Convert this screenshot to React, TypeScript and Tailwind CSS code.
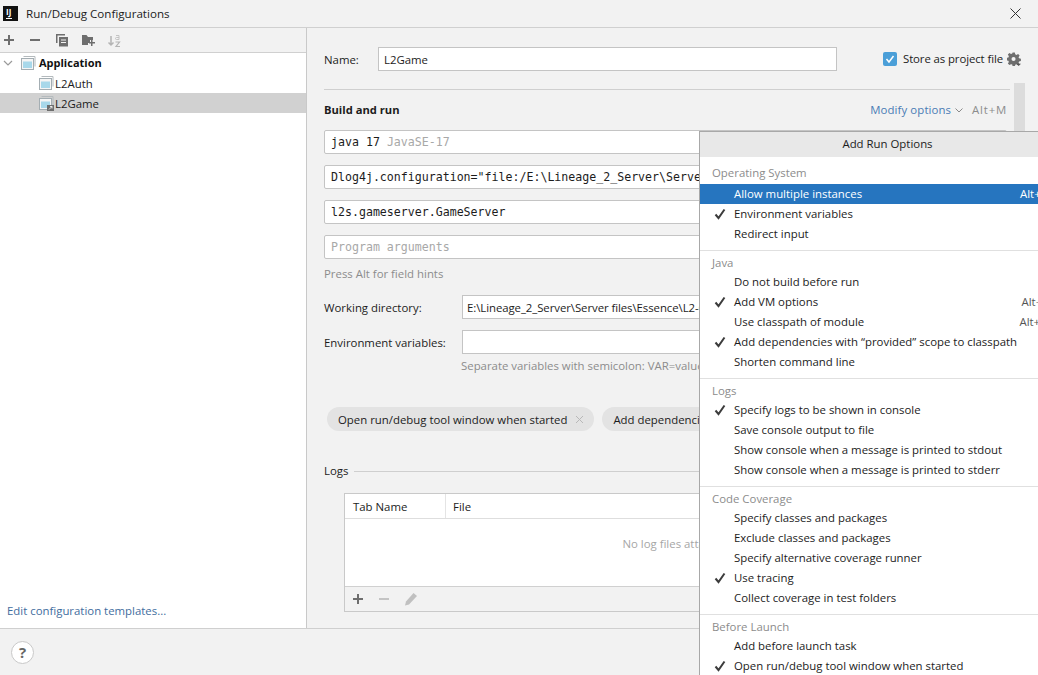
import React from 'react';

const ui = "[font-family:'Open_Sans','Noto_Sans',sans-serif]";

function PlusIcon({ className = 'text-[#6e6e6e]' }: { className?: string }) {
  return (
    <svg width="12" height="12" viewBox="0 0 12 12" className={className}>
      <path d="M5 1h2v4h4v2H7v4H5V7H1V5h4z" fill="currentColor" />
    </svg>
  );
}

function MinusIcon({ className = 'text-[#6e6e6e]' }: { className?: string }) {
  return (
    <svg width="12" height="12" viewBox="0 0 12 12" className={className}>
      <rect x="1" y="5" width="10" height="2" fill="currentColor" />
    </svg>
  );
}

function CopyIcon() {
  return (
    <svg width="14" height="14" viewBox="0 0 14 14">
      <path d="M1 1h9v1.500H2.500V10H1z" fill="#6e6e6e" />
      <path d="M4 4h9v9.500H4z" fill="#6e6e6e" />
      <path d="M6 6.500h5v1H6zM6 9h5v1H6z" fill="#f2f2f2" />
    </svg>
  );
}

function FolderPlusIcon() {
  return (
    <svg width="15" height="14" viewBox="0 0 15 14">
      <path d="M1 2h4.500l1.500 2h5v3H9v3H7v2H1z" fill="#6e6e6e" />
      <path d="M10 7h1.500v2H14v1.500h-2.500V13H10v-2.500H8V9h2z" fill="#6e6e6e" />
    </svg>
  );
}

function SortIcon() {
  return (
    <svg width="14" height="15" viewBox="0 0 14 15" fill="none">
      <path d="M4 3v9M1.500 9.500 4 12l2.500-2.500" stroke="#b4b4b4" strokeWidth="1.500" />
      <path d="M9 2.500h3v4H9.500a1 1 0 0 1 0-2H12" stroke="#c4c4c4" />
      <path d="M8.500 9h4L9 13.500h4" stroke="#b4b4b4" strokeWidth="1.200" />
    </svg>
  );
}

function AppIcon({ link }: { link?: boolean }) {
  return (
    <svg width="15" height="15" viewBox="0 0 15 15" className="shrink-0">
      <path d="M2.500 0.500h11.500v10" fill="none" stroke="#b4babd" />
      <rect x="0.500" y="2.500" width="12" height="11" fill="#f5f5f5" stroke="#a4aeb3" />
      <rect x="2" y="5.500" width="9" height="6.500" fill="#a8d8ea" />
      {link && (
        <>
          <rect x="8" y="9" width="7" height="6" fill="#6e6e6e" />
          <path d="M10 13.500 13 10.500M11 10.500h2v2" stroke="#fff" strokeWidth="0.800" fill="none" />
        </>
      )}
    </svg>
  );
}

function CheckMark() {
  return (
    <svg width="12" height="12" viewBox="0 0 12 12" fill="none">
      <path d="M1.500 6.500 4.500 10 10.500 1.500" stroke="#3c3c3c" strokeWidth="2" />
    </svg>
  );
}

function GearIcon() {
  return (
    <svg width="14" height="14" viewBox="0 0 15 15">
      <path
        d="M6 0.500h2.400l.4 2 1.300.6 1.800-1 1.600 1.700-1.100 1.700.5 1.300 2 .5v2.300l-2 .5-.5 1.300 1 1.200-1.600 1.600-1.700-1-1.300.5-.3 1.800H6l-.4-2-1.300-.5-1.700 1-1.700-1.600 1.100-1.700-.5-1.300-2-.4V6.300l2-.5.5-1.300-1.100-1.700L2.600 1.100l1.700 1.100 1.300-.5z"
        fill="#6e6e6e"
      />
      <circle cx="7" cy="7.500" r="2.200" fill="#f2f2f2" />
      <path d="M10 12.500h5l-2.500 2.500z" fill="#555" />
    </svg>
  );
}

type Item = { label: string; checked?: boolean; shortcut?: string; active?: boolean };

const sections: { title: string; items: Item[] }[] = [
  {
    title: 'Operating System',
    items: [
      { label: 'Allow multiple instances', shortcut: 'Alt+U', active: true },
      { label: 'Environment variables', checked: true },
      { label: 'Redirect input' },
    ],
  },
  {
    title: 'Java',
    items: [
      { label: 'Do not build before run' },
      { label: 'Add VM options', checked: true, shortcut: 'Alt+V' },
      { label: 'Use classpath of module', shortcut: 'Alt+O' },
      { label: 'Add dependencies with “provided” scope to classpath', checked: true },
      { label: 'Shorten command line' },
    ],
  },
  {
    title: 'Logs',
    items: [
      { label: 'Specify logs to be shown in console', checked: true },
      { label: 'Save console output to file' },
      { label: 'Show console when a message is printed to stdout' },
      { label: 'Show console when a message is printed to stderr' },
    ],
  },
  {
    title: 'Code Coverage',
    items: [
      { label: 'Specify classes and packages' },
      { label: 'Exclude classes and packages' },
      { label: 'Specify alternative coverage runner' },
      { label: 'Use tracing', checked: true },
      { label: 'Collect coverage in test folders' },
    ],
  },
  {
    title: 'Before Launch',
    items: [
      { label: 'Add before launch task' },
      { label: 'Open run/debug tool window when started', checked: true },
    ],
  },
];

function OptionsPopup() {
  return (
    <div className="absolute left-[699px] top-[131px] w-[360px] h-[560px] bg-white border-l border-t border-[#a8a8a8] text-[#1c1c1c]">
      <div className="h-[25px] bg-[#e8e8e8] flex items-center justify-center pl-[16px] pb-[2px]">Add Run Options</div>
      {sections.map((s, i) => (
        <div key={s.title} className={i === 0 ? 'pt-[6px] pb-[6px]' : 'pt-[2px] pb-[6px] border-t border-[#e0e0e0]'}>
          <div className={`${i === 0 ? 'h-[20px] mb-px' : 'h-[19px]'} pl-3 flex items-center text-[#8c8c8c]`}>{s.title}</div>
          {s.items.map((it) => (
            <div
              key={it.label}
              className={`h-5 flex items-center pr-[10px] ${it.active ? 'bg-[#2675bf] text-white' : ''}`}
            >
              <span className="w-[34px] pl-[14px] shrink-0">{it.checked && <CheckMark />}</span>
              <span>{it.label}</span>
              {it.shortcut && <span className={`ml-auto ${it.active ? 'text-white' : 'text-[#555]'}`}>{it.shortcut}</span>}
            </div>
          ))}
        </div>
      ))}
    </div>
  );
}

function MonoField({ children }: { children: React.ReactNode }) {
  return (
    <div className="h-6 bg-white border border-[#c4c4c4] rounded-[2px] pl-[6px] pt-px flex items-center whitespace-nowrap overflow-hidden [font-family:'DejaVu_Sans_Mono',monospace] text-[11.6px] text-[#1c1c1c]">
      {children}
    </div>
  );
}

function Sidebar() {
  return (
    <aside className="w-[307px] shrink-0 flex flex-col border-r border-[#c9c9c9]">
      <div className="h-[25px] shrink-0 flex items-center gap-[13px] pl-[3px] border-b border-[#d0d0d0]">
        <PlusIcon />
        <span className="ml-[1px]"><MinusIcon /></span>
        <span className="ml-[1px]"><CopyIcon /></span>
        <span className="ml-[-1px]"><FolderPlusIcon /></span>
        <span className="ml-[-2px]"><SortIcon /></span>
      </div>
      <div className="flex-1 bg-white flex flex-col pb-[9px]">
        <div className="h-5 flex items-center pl-[3px] gap-[8px] text-[#111]">
          <svg width="10" height="10" viewBox="0 0 10 10" fill="none">
            <path d="M1 3l4 4 4-4" stroke="#9a9a9a" strokeWidth="1.200" />
          </svg>
          <AppIcon />
          <span className="ml-[-5px] pt-px font-bold text-[11px]">Application</span>
        </div>
        <div className="h-5 flex items-center pl-[39px] gap-[1px]"><AppIcon /><span className="pt-px">L2Auth</span></div>
        <div className="h-5 flex items-center pl-[39px] gap-[1px] bg-[#d1d1d1]"><AppIcon link /><span className="pt-px">L2Game</span></div>
        <a className="mt-auto pl-[7px] text-[#3f6d9e]">Edit configuration templates...</a>
      </div>
    </aside>
  );
}

function MainPanel() {
  return (
    <section className="flex-1 min-w-0 pl-[17px] overflow-hidden relative">
      <div className="flex items-center h-6 mt-[19px]">
        <span className="w-[54px] pt-px">Name:</span>
        <div className="w-[459px] h-6 bg-white border border-[#c4c4c4] pl-[5px] pt-px flex items-center">L2Game</div>
        <span className="ml-[46px] w-[14px] h-[14px] rounded-[2px] bg-[#4b9fd8] flex items-center justify-center">
          <svg width="10" height="10" viewBox="0 0 10 10" fill="none">
            <path d="M1.500 5 4 8l4.500-6" stroke="#fff" strokeWidth="1.500" />
          </svg>
        </span>
        <span className="ml-[6px] tracking-[-0.1px]">Store as project file</span>
        <span className="ml-[4px]"><GearIcon /></span>
      </div>
      <div className="h-px bg-[#cfcfcf] mt-[18px] w-[686px]" />
      <div className="flex items-center h-5 mt-[10px] w-[683px]">
        <span className="font-bold text-[11.2px]">Build and run</span>
        <span className="ml-auto text-[#4a7cb5] tracking-[0.1px]">Modify options</span>
        <svg width="8" height="8" viewBox="0 0 8 8" fill="none" className="ml-[4px]">
          <path d="M.5 2.500 4 6l3.500-3.500" stroke="#8a8a8a" />
        </svg>
        <span className="ml-[9px] text-[#8c8c8c] tracking-[0.8px]">Alt+M</span>
      </div>
      <div className="w-[683px] mt-[10px] flex flex-col gap-[11px]">
        <MonoField>
          <span>java 17</span>
          <span className="ml-[7px] text-[#a8a8a8]">JavaSE-17</span>
        </MonoField>
        <MonoField>Dlog4j.configuration="file:/E:\Lineage_2_Server\Server files\Essence\L2-config\log4j2.xml"</MonoField>
        <MonoField>l2s.gameserver.GameServer</MonoField>
        <MonoField><span className="text-[#a8a8a8]">Program arguments</span></MonoField>
      </div>
      <div className="text-[#8c8c8c] h-4 flex items-center mt-[7px]">Press Alt for field hints</div>
      <div className="flex items-center mt-[13px]">
        <span className="w-[138px] pt-px">Working directory:</span>
        <div className="w-[540px] h-6 bg-white border border-[#c4c4c4] pl-[4px] pt-px flex items-center whitespace-nowrap overflow-hidden tracking-[-0.07px]">E:\Lineage_2_Server\Server files\Essence\L2-GameServer</div>
      </div>
      <div className="flex items-center mt-[11px]">
        <span className="w-[138px] pt-px">Environment variables:</span>
        <div className="w-[540px] h-6 bg-white border border-[#c4c4c4]" />
      </div>
      <div className="pl-[137px] text-[#8c8c8c] h-4 mt-[4px] flex items-center whitespace-nowrap">Separate variables with semicolon: VAR=value; VAR1=value1</div>
      <div className="flex gap-2 ml-[3px] mt-[33px] whitespace-nowrap">
        <span className="h-6 rounded-full bg-[#e3e3e3] pl-[11px] pr-[10px] pt-px flex items-center gap-2 shrink-0">
          Open run/debug tool window when started
          <svg width="9" height="9" viewBox="0 0 9 9" fill="none">
            <path d="M1 1l7 7M8 1 1 8" stroke="#b8b8b8" />
          </svg>
        </span>
        <span className="h-6 rounded-full bg-[#e3e3e3] pl-[11px] pr-[9px] pt-px flex items-center shrink-0">Add dependencies with “provided” scope</span>
      </div>
      <div className="flex items-center gap-[6px] mt-[30px] h-[20px]">
        <span>Logs</span>
        <div className="h-px w-[400px] bg-[#cfcfcf]" />
      </div>
      <div className="ml-[20px] mt-[12px] w-[663px] h-[119px] border border-[#c9c9c9] flex flex-col">
        <div className="h-[25px] shrink-0 bg-white border-b border-[#dedede] flex items-center">
          <span className="w-[101px] h-full pl-2 pt-px border-r border-[#e4e4e4] flex items-center">Tab Name</span>
          <span className="pl-[7px] pt-px">File</span>
        </div>
        <div className="flex-1 bg-white border-b border-[#d0d0d0] flex items-center justify-center text-[#a6a6a6] pb-[18px] pl-[2px]">No log files attached</div>
        <div className="h-[24px] shrink-0 flex items-center gap-[14px] pl-[7px]">
          <PlusIcon />
          <MinusIcon className="text-[#c4c4c4]" />
          <svg width="14" height="14" viewBox="0 0 14 14">
            <path d="M9.500 1 13 4 5 12.500 1 13.500 2 9.500z" fill="#c0c0c0" />
          </svg>
        </div>
      </div>
      <div className="absolute left-[707px] top-[55px] w-[11px] h-[70px] bg-[#dcdcdc]" />
    </section>
  );
}

export default function App() {
  return (
    <div className={`${ui} relative w-[1038px] h-[675px] overflow-hidden bg-[#f2f2f2] text-[11.4px] text-[#1c1c1c] flex flex-col`}>
      <header className="h-[28px] shrink-0 flex items-center border-b border-[#d0d0d0] pl-[3px]">
        <span className="w-[15px] h-[15px] bg-[#111] text-white text-[8px] font-bold leading-none flex flex-col items-start pl-[3px] pt-[2px]">
          IJ
          <span className="w-[6px] h-px bg-white mt-[2px]" />
        </span>
        <span className="ml-[8px] text-[11.6px]">Run/Debug Configurations</span>
        <svg width="11" height="11" viewBox="0 0 11 11" fill="none" className="ml-auto mr-[17px]">
          <path d="M.5.500l10 10M10.500.500l-10 10" stroke="#333" />
        </svg>
      </header>
      <div className="flex-1 min-h-0 flex">
        <Sidebar />
        <MainPanel />
      </div>
      <footer className="h-[47px] shrink-0 border-t border-[#cfcfcf] flex items-center pl-[11px]">
        <span className="w-[23px] h-[23px] rounded-full bg-white border border-[#c9c9c9] flex items-center justify-center font-bold text-[15px] text-[#666]">?</span>
      </footer>
      <OptionsPopup />
    </div>
  );
}
